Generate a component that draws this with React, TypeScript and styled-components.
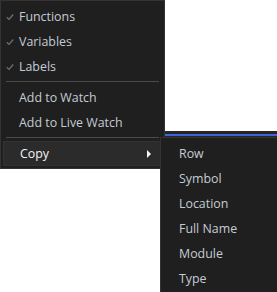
import React from 'react';
import styled, { createGlobalStyle } from 'styled-components';

const GlobalStyle = createGlobalStyle`
  html, body {
    margin: 0;
    padding: 0;
    background: #ffffff;
    overflow: hidden;
  }
  body {
    font-family: 'Open Sans', 'Noto Sans', sans-serif;
  }
`;

const Page = styled.div`
  position: relative;
  width: 277px;
  height: 292px;
  overflow: hidden;
`;

const Backdrop = styled.div`
  position: absolute;
  left: 165px;
  top: 131px;
  right: 0;
  height: 6px;
  background: #262626;

  &::after {
    content: '';
    position: absolute;
    left: 0;
    right: 0;
    top: 3px;
    height: 2px;
    background: #3e64d8;
  }
`;

const Menu = styled.div`
  display: flex;
  flex-direction: column;
  width: 165px;
  box-sizing: border-box;
  padding: 3px 0 2px;
  background: #1f1f1f;
  border: 1px solid #333333;
`;

const SubMenu = styled(Menu)`
  position: absolute;
  left: 160px;
  top: 137px;
  width: 130px;
  height: 170px;
`;

const Item = styled.div<{ $active?: boolean }>`
  position: relative;
  display: flex;
  align-items: center;
  height: 25px;
  box-sizing: border-box;
  margin: 0 ${(p) => (p.$active ? '2px' : '0')};
  padding-left: ${(p) => (p.$active ? '16px' : '18px')};
  font-size: 12.4px;
  color: ${(p) => (p.$active ? '#f2f4f7' : '#c5ccd4')};
  background: ${(p) => (p.$active ? '#2b2b2b' : 'transparent')};
  border: ${(p) => (p.$active ? '1px solid #323232' : '0')};
  white-space: nowrap;
`;

const Check = styled.span`
  position: absolute;
  left: 5px;
  top: 50%;
  transform: translateY(-50%);
  display: flex;
`;

const Arrow = styled.span`
  position: absolute;
  right: 10px;
  top: 50%;
  margin-top: -4px;
  width: 0;
  height: 0;
  border-top: 4px solid transparent;
  border-bottom: 4px solid transparent;
  border-left: 4px solid #f5f5f5;
`;

const Separator = styled.div`
  height: 1px;
  margin: 2px 5px 3px;
  background: #4a4a4a;
`;

const CheckIcon = () => (
  <svg width="8" height="7" viewBox="0 0 8 7">
    <path d="M0.8 3.8 L3 5.9 L7.2 1" fill="none" stroke="#6f6f6f" strokeWidth="1.3" />
  </svg>
);

const CheckItem = ({ label }: { label: string }) => (
  <Item>
    <Check>
      <CheckIcon />
    </Check>
    {label}
  </Item>
);

const copyFields = ['Row', 'Symbol', 'Location', 'Full Name', 'Module', 'Type'];

const App = () => (
  <>
    <GlobalStyle />
    <Page>
      <Backdrop />
      <Menu>
        <CheckItem label="Functions" />
        <CheckItem label="Variables" />
        <CheckItem label="Labels" />
        <Separator />
        <Item>Add to Watch</Item>
        <Item>Add to Live Watch</Item>
        <Separator />
        <Item $active>
          Copy
          <Arrow />
        </Item>
      </Menu>
      <SubMenu>
        {copyFields.map((field) => (
          <Item key={field}>{field}</Item>
        ))}
      </SubMenu>
    </Page>
  </>
);

export default App;
